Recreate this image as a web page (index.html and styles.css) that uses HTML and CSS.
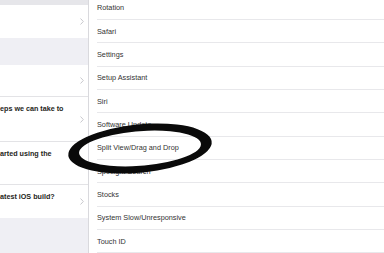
FILE: index.html
```html
<!DOCTYPE html>
<html lang="en">
<head>
    <meta charset="UTF-8">
    <meta name="viewport" content="width=device-width, initial-scale=1.0">
    <title>Feedback Areas</title>
    <link rel="stylesheet" href="styles.css">
</head>
<body>

    <div class="split">
        <!-- Left: master list -->
        <div class="master">
            <div class="band"></div>
            <div class="row row-1">
                <span class="title"></span>
                <svg class="chev" width="4" height="7" viewBox="0 0 4 7"><path d="M0.5 0.5 L3.3 3.5 L0.5 6.5" fill="none" stroke="#c8c8cd" stroke-width="1"/></svg>
            </div>
            <div class="section"></div>
            <div class="row row-2">
                <span class="title"></span>
                <svg class="chev" width="4" height="7" viewBox="0 0 4 7"><path d="M0.5 0.5 L3.3 3.5 L0.5 6.5" fill="none" stroke="#c8c8cd" stroke-width="1"/></svg>
            </div>
            <div class="row row-3">
                <span class="title">eps we can take to</span>
                <svg class="chev" width="4" height="7" viewBox="0 0 4 7"><path d="M0.5 0.5 L3.3 3.5 L0.5 6.5" fill="none" stroke="#c8c8cd" stroke-width="1"/></svg>
            </div>
            <div class="row row-4">
                <span class="title">arted using the</span>
                <svg class="chev" width="4" height="7" viewBox="0 0 4 7"><path d="M0.5 0.5 L3.3 3.5 L0.5 6.5" fill="none" stroke="#c8c8cd" stroke-width="1"/></svg>
            </div>
            <div class="row row-5">
                <span class="title">atest iOS build?</span>
                <svg class="chev" width="4" height="7" viewBox="0 0 4 7"><path d="M0.5 0.5 L3.3 3.5 L0.5 6.5" fill="none" stroke="#c8c8cd" stroke-width="1"/></svg>
            </div>
            <div class="section fill"></div>
        </div>

        <!-- Right: areas list -->
        <ul class="areas">
            <li>Rotation</li>
            <li>Safari</li>
            <li>Settings</li>
            <li>Setup Assistant</li>
            <li>Siri</li>
            <li>Software Update</li>
            <li>Split View/Drag and Drop</li>
            <li>Spotlight Search</li>
            <li>Stocks</li>
            <li>System Slow/Unresponsive</li>
            <li>Touch ID</li>
        </ul>
    </div>

    <!-- hand drawn marker circle -->
    <svg class="marker" width="384" height="253" viewBox="0 0 384 253">
        <g transform="translate(140 148.5) rotate(-2) skewX(-25)">
            <path fill="#0a0a0a" fill-rule="evenodd"
                  d="M-71 0 A71 24.5 0 1 0 71 0 A71 24.5 0 1 0 -71 0 Z
                     M-60.5 0 A60.5 17.5 0 1 0 60.5 0 A60.5 17.5 0 1 0 -60.5 0 Z"/>
        </g>
    </svg>

</body>
</html>
```

FILE: styles.css
```css
body {
    margin: 0;
    width: 384px;
    height: 253px;
    overflow: hidden;
    position: relative;
    background: #fff;
    font-family: "Liberation Sans", Arial, sans-serif;
}
.split {
    display: flex;
    height: 253px;
}
.master {
    width: 88px;
    border-right: 1px solid #d9d9dd;
    display: flex;
    flex-direction: column;
    background: #fff;
}
.band {
    height: 5px;
    background: #e6e6ea;
}
.section {
    height: 27px;
    background: #efeff4;
}
.section.fill {
    flex: 1;
}
.row {
    display: flex;
    align-items: center;
    justify-content: space-between;
    box-sizing: border-box;
    padding-right: 4px;
    background: #fff;
}
.row-1 { height: 33px; }
.row-2 { height: 32px; border-bottom: 1px solid #e3e3e6; }
.row-3 { height: 45px; border-bottom: 1px solid #e3e3e6; }
.row-4 { height: 43px; border-bottom: 1px solid #e3e3e6; }
.row-5 { height: 33px; }
.title {
    align-self: flex-start;
    padding-top: 7px;
    font-size: 7.2px;
    line-height: 9px;
    font-weight: bold;
    color: #1e1e20;
    white-space: nowrap;
}
.chev {
    flex-shrink: 0;
}
.areas {
    flex: 1;
    list-style: none;
    margin: -3.33px 0 0;
    padding: 0;
}
.areas li {
    height: 23.33px;
    box-sizing: border-box;
    margin-left: 8px;
    border-bottom: 1px solid #e8e8eb;
    display: flex;
    align-items: center;
    font-size: 7.3px;
    color: #333;
    white-space: nowrap;
}
.marker {
    position: absolute;
    left: 0;
    top: 0;
}
```
